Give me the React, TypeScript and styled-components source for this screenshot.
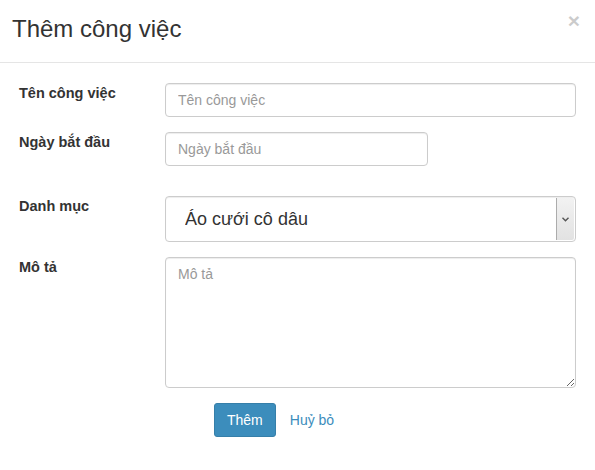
import { FC } from 'react'
import styled, { createGlobalStyle } from 'styled-components'

const GlobalStyle = createGlobalStyle`
    html, body {
        margin: 0;
        padding: 0;
        background: #fff;
    }
    body {
        font-family: "Liberation Sans", Arial, sans-serif;
        font-size: 14px;
        color: #333;
    }
`

const Modal = styled.div`
    width: 595px;
    height: 470px;
    background: #fff;
    display: flex;
    flex-direction: column;
`

const Header = styled.div`
    display: flex;
    justify-content: space-between;
    align-items: flex-start;
    padding: 13px 15px 17px 12px;
    border-bottom: 1px solid #e5e5e5;
`

const Title = styled.h4`
    margin: 0;
    font-size: 24px;
    font-weight: 400;
    line-height: 32px;
    color: #333;
`

const Close = styled.button`
    border: 0;
    background: transparent;
    padding: 0;
    margin-top: -3px;
    font-family: "Liberation Sans", Arial, sans-serif;
    font-size: 21px;
    font-weight: 700;
    line-height: 1;
    color: #000;
    opacity: 0.2;
    cursor: pointer;
`

const Body = styled.form`
    display: flex;
    flex-direction: column;
    padding: 20px 19px 0 19px;
`

interface iRow {
    $after?: number;
}

const Row = styled.div<iRow>`
    display: flex;
    align-items: flex-start;
    margin-bottom: ${props => props.$after ?? 15}px;
`

const Label = styled.label`
    width: 146px;
    flex-shrink: 0;
    font-weight: 700;
    font-size: 14.5px;
    line-height: 20px;
    color: #333;
`

interface iField {
    $width?: number;
}

const Input = styled.input<iField>`
    box-sizing: border-box;
    width: ${props => props.$width ? `${props.$width}px` : '100%'};
    height: 34px;
    padding: 6px 12px;
    font-family: "Liberation Sans", Arial, sans-serif;
    font-size: 14px;
    color: #555;
    background: #fff;
    border: 1px solid #ccc;
    border-radius: 4px;
    box-shadow: inset 0 1px 1px rgba(0, 0, 0, 0.075);
    outline: none;
    &::placeholder {
        color: #999;
    }
`

const SelectBox = styled.div`
    flex: 1;
    display: flex;
    height: 46px;
    box-sizing: border-box;
    border: 1px solid #ccc;
    border-radius: 4px;
    overflow: hidden;
    box-shadow: inset 0 1px 1px rgba(0, 0, 0, 0.075);
`

const Select = styled.select`
    flex: 1;
    appearance: none;
    border: 0;
    background: transparent;
    padding: 0 19px;
    font-family: "Liberation Sans", Arial, sans-serif;
    font-size: 18px;
    color: #333;
    outline: none;
`

const Arrow = styled.div`
    width: 17px;
    margin: 1px 1px 1px 0;
    display: flex;
    align-items: center;
    justify-content: center;
    background: linear-gradient(#f2f2f2, #e2e2e2);
    border-left: 1px solid #acacac;
    border-radius: 0 2px 2px 0;
`

const TextArea = styled.textarea`
    flex: 1;
    box-sizing: border-box;
    height: 131px;
    padding: 6px 12px;
    font-family: "Liberation Sans", Arial, sans-serif;
    font-size: 14px;
    line-height: 20px;
    color: #555;
    border: 1px solid #ccc;
    border-radius: 4px;
    box-shadow: inset 0 1px 1px rgba(0, 0, 0, 0.075);
    resize: vertical;
    outline: none;
    &::placeholder {
        color: #999;
    }
`

const Actions = styled.div`
    display: flex;
    align-items: center;
    gap: 14px;
    padding-left: 195px;
`

const PrimaryButton = styled.button`
    height: 34px;
    padding: 0 12px;
    font-family: "Liberation Sans", Arial, sans-serif;
    font-size: 14px;
    color: #fff;
    background: #3c8dbc;
    border: 1px solid #367fa9;
    border-radius: 3px;
    cursor: pointer;
`

const LinkButton = styled.a`
    font-size: 14px;
    color: #3c8dbc;
    text-decoration: none;
    cursor: pointer;
`

const App: FC = () => {
    return (
        <Modal>
            <GlobalStyle />
            <Header>
                <Title>Thêm công việc</Title>
                <Close type="button">×</Close>
            </Header>
            <Body>
                <Row>
                    <Label>Tên công việc</Label>
                    <Input placeholder="Tên công việc" />
                </Row>
                <Row $after={30}>
                    <Label>Ngày bắt đầu</Label>
                    <Input placeholder="Ngày bắt đầu" $width={263} />
                </Row>
                <Row>
                    <Label>Danh mục</Label>
                    <SelectBox>
                        <Select defaultValue="ao-cuoi">
                            <option value="ao-cuoi">Áo cưới cô dâu</option>
                        </Select>
                        <Arrow>
                            <svg width="7" height="5" viewBox="0 0 7 5">
                                <path d="M0.5 0.8 L3.5 3.8 L6.5 0.8" fill="none" stroke="#555" strokeWidth="1.4" />
                            </svg>
                        </Arrow>
                    </SelectBox>
                </Row>
                <Row>
                    <Label>Mô tả</Label>
                    <TextArea placeholder="Mô tả" />
                </Row>
                <Actions>
                    <PrimaryButton type="button">Thêm</PrimaryButton>
                    <LinkButton>Huỷ bỏ</LinkButton>
                </Actions>
            </Body>
        </Modal>
    )
}

export default App
